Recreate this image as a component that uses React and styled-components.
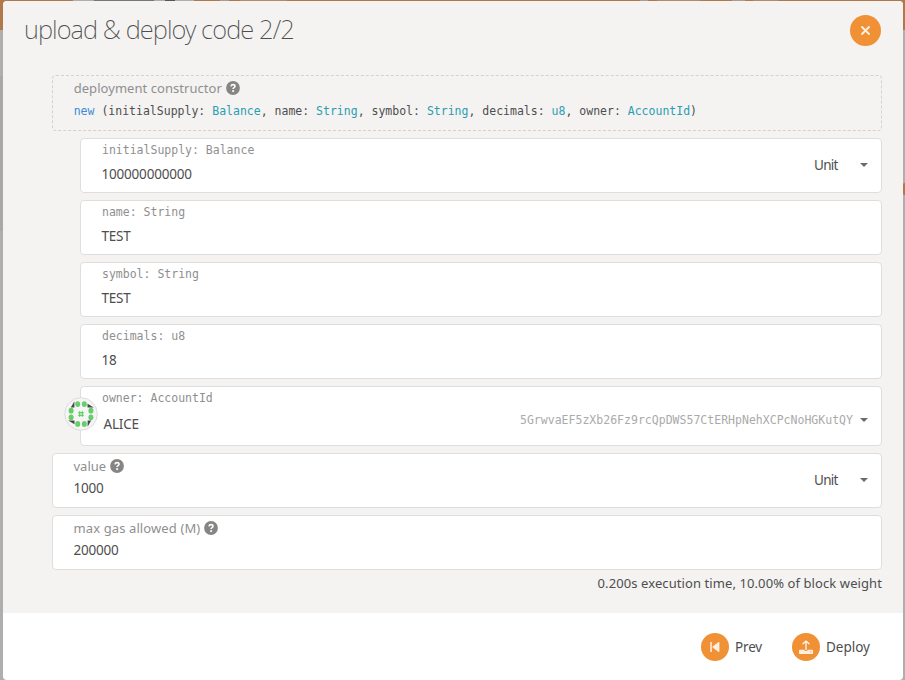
import React from 'react';
import styled, { createGlobalStyle } from 'styled-components';

const GlobalStyle = createGlobalStyle`
  *, *::before, *::after { box-sizing: border-box; }
  html, body { margin: 0; padding: 0; overflow: hidden; }
  body { font-family: "Noto Sans", "Open Sans", sans-serif; font-size: 14px; color: #4e4e4e; }
`;

const Backdrop = styled.div`
  width: 905px;
  height: 680px;
  padding: 1px 2px 0 3px;
  background:
    radial-gradient(circle at 907px 189px, #b1784a 0 6px, transparent 7px),
    linear-gradient(#aaa8a6, #aaa8a6) 0 76px / 3px 155px no-repeat,
    linear-gradient(90deg, #b1784a 0 73px, #b0aeac 73px 94px, #77757a 94px 154px, #b0aeac 154px 165px, #555 165px 175px, #b0aeac 175px 194px, #b1784a 194px 220px, #b09a8c 220px 229px, #b1784a 229px 240px, #b38b6b 240px 287px, #b1784a 287px 640px, #b09a8c 640px 648px, #b1784a 648px 657px, #b38b6b 657px 700px, #b1784a 700px 732px, #b09a8c 732px 745px, #b1784a 745px 753px, #b38b6b 753px 778px, #b1784a 778px) 0 0 / 100% 30px no-repeat,
    #aeaeae;
`;

const Dialog = styled.div`
  display: flex;
  flex-direction: column;
  height: 679px;
  border-radius: 4px;
  overflow: hidden;
  background: #fff;
`;

const Header = styled.header`
  display: flex;
  align-items: flex-start;
  justify-content: space-between;
  height: 74px;
  padding: 14px 22px 0 21px;
  background: #f4f3f2;
`;

const Title = styled.h1`
  margin: 0;
  font-size: 25.5px;
  line-height: 29px;
  font-weight: 200;
  letter-spacing: ${(p) => p.$track}px;
  white-space: nowrap;
  color: #4e4e4e;
`;

const RoundButton = styled.button`
  display: flex;
  align-items: center;
  justify-content: center;
  flex: none;
  width: ${(p) => p.$size}px;
  height: ${(p) => p.$size}px;
  padding: 0;
  border: 0;
  border-radius: 50%;
  color: #fdf0e2;
  background: #f19135;
`;

const Content = styled.main`
  display: flex;
  flex-direction: column;
  gap: 7px;
  height: 538px;
  padding: 0 21px 0 49px;
  background: #f4f3f2;
`;

const Constructor = styled.section`
  height: 56px;
  padding: 4px 20.7px;
  border: 1px dashed #d3d2d1;
  border-radius: 4px;
`;

const Params = styled.div`
  display: flex;
  flex-direction: column;
  gap: 7px;
  padding-left: 28px;
`;

const Field = styled.div`
  position: relative;
  display: flex;
  justify-content: space-between;
  height: ${(p) => p.$height || 55}px;
  padding: ${(p) => p.$top || 3}px 13px 0 20.5px;
  border: 1px solid #dededf;
  border-radius: 4px;
  background: #fff;
`;

const Label = styled.div`
  display: flex;
  align-items: center;
  gap: 4px;
  height: 16px;
  font-size: 13px;
  line-height: 16px;
  letter-spacing: ${(p) => p.$track || 0}px;
  white-space: nowrap;
  color: #8f8f8f;
`;

const MonoLabel = styled(Label)`
  padding-left: 0.5px;
  font-family: "DejaVu Sans Mono", monospace;
  font-size: 11.5px;
`;

const Value = styled.div`
  margin-top: ${(p) => p.$gap}px;
  margin-left: ${(p) => p.$indent || 0}px;
  font-size: 13.5px;
  line-height: 18px;
  letter-spacing: ${(p) => p.$track || 0}px;
`;

const Signature = styled.code`
  display: block;
  margin-top: 7px;
  font-family: "DejaVu Sans Mono", monospace;
  font-size: 11.5px;
  line-height: 17px;
  white-space: nowrap;
`;

const Keyword = styled.span`
  color: #3b8ad8;
`;

const Type = styled.span`
  color: #2a9db0;
`;

const Picker = styled.div`
  display: flex;
  align-items: center;
  align-self: flex-start;
  justify-content: space-between;
  width: 54px;
  height: 18px;
  margin-top: ${(p) => p.$top}px;
  font-size: 13.5px;
  letter-spacing: -0.7px;
`;

const Address = styled.div`
  display: flex;
  align-items: center;
  align-self: flex-start;
  gap: 7px;
  height: 18px;
  margin-top: 21px;
  font-family: "DejaVu Sans Mono", monospace;
  font-size: 11.5px;
  letter-spacing: 0.015px;
  color: #aaa;
`;

const Caret = styled.span`
  width: 0;
  height: 0;
  border: 4px solid transparent;
  border-top-color: #6a6a6a;
  border-bottom: 0;
`;

const IdenticonBadge = styled.div`
  position: absolute;
  left: -17px;
  top: 10px;
  width: 34px;
  height: 34px;
`;

const Note = styled.div`
  margin-top: -4px;
  font-size: 13px;
  line-height: 20px;
  letter-spacing: ${(p) => p.$track}px;
  text-align: right;
  white-space: nowrap;
`;

const Footer = styled.footer`
  display: flex;
  align-items: center;
  justify-content: flex-end;
  gap: 30px;
  height: 67px;
  padding: 1px 33px 0 0;
`;

const Action = styled.div`
  display: flex;
  align-items: center;
  gap: 6px;
  font-size: 13.5px;
  letter-spacing: ${(p) => p.$track || 0}px;
`;

const Help = () => (
  <svg width="14" height="14" viewBox="0 0 14 14">
    <circle cx="7" cy="7" r="6.9" fill="#868583" />
    <path d="M5 5.4C5.2 4.2 6 3.7 7 3.7c1.2 0 2 .6 2 1.6 0 1.4-1.9 1.3-1.9 2.7" fill="none" stroke="#f8f8f8" strokeWidth="1.7" />
    <circle cx="7.1" cy="10.1" r="1.1" fill="#f8f8f8" />
  </svg>
);

const CloseIcon = () => (
  <svg width="11" height="11" viewBox="0 0 11 11">
    <path d="M2 2l7 7M9 2L2 9" stroke="currentColor" strokeWidth="1.8" strokeLinecap="round" />
  </svg>
);

const PrevIcon = () => (
  <svg width="14" height="14" viewBox="0 0 14 14" fill="currentColor">
    <path d="M2.3 2h1.5v10H2.3zM11.4 2.4v9.2c0 .5-.5.6-.8.3L4.6 7.5a.7.7 0 0 1 0-1l6-4.400c.3-.3.8-.1.8.3z" />
  </svg>
);

const UploadIcon = () => (
  <svg width="14" height="14" viewBox="0 0 14 14" fill="currentColor">
    <path d="M7 .9v8.6M4 3.8l3-2.9 3 2.9" fill="none" stroke="currentColor" strokeWidth="1.4" strokeLinejoin="round" strokeLinecap="round" />
    <path fillRule="evenodd" d="M.8 9.7h4.600v.6c0 1 3.200 1 3.200 0v-.6h4.600c.5 0 .8.3.8.8v2.700c0 .5-.3.8-.8.8H.8a.8.8 0 0 1-.8-.8v-2.700c0-.5.3-.8.8-.8zM11.300 11.600v.9h.9v-.9z" />
  </svg>
);

const dots = [[-3.3, -9.9], [3.3, -9.9], [9.9, -3.3], [9.9, 3.3], [3.3, 9.9], [-3.3, 9.9], [-9.9, 3.3], [-9.9, -3.3]];

const Identicon = () => (
  <svg width="34" height="34" viewBox="-17 -17 34 34">
    <circle r="16.3" fill="#f5f5f5" stroke="#dcdcdc" />
    {[0, 90, 180, 270].map((a) => (
      <path key={a} transform={`rotate(${a})`} d="M-6.600-12.800v6.300h-3.600z" fill="#47474b" />
    ))}
    {dots.map(([x, y]) => (
      <ellipse key={`${x},${y}`} cx={x} cy={y} rx="2.5" ry="2.9" fill="#66ce68" />
    ))}
    <path d="M-1.400-2.700v5.400M1.400-2.700v5.400M-2.700-1.400h5.400M-2.700 1.400h5.400" stroke="#66ce68" strokeWidth="1.3" />
  </svg>
);

const args = [
  ['initialSupply', 'Balance'],
  ['name', 'String'],
  ['symbol', 'String'],
  ['decimals', 'u8'],
  ['owner', 'AccountId'],
];

const values = ['100000000000', 'TEST', 'TEST', '18'];

const Unit = ({ top }) => (
  <Picker $top={top}>
    Unit
    <Caret />
  </Picker>
);

export default function App() {
  return (
    <>
      <GlobalStyle />
      <Backdrop>
        <Dialog>
          <Header>
            <Title $track={-0.91}>upload &amp; deploy code 2/2</Title>
            <RoundButton $size={31} aria-label="Close"><CloseIcon /></RoundButton>
          </Header>
          <Content>
            <Constructor>
              <Label $track={0.05}>deployment constructor<Help /></Label>
              <Signature>
                <Keyword>new</Keyword>{' ('}
                {args.map(([name, type], i) => (
                  <React.Fragment key={name}>
                    {i > 0 && ', '}{name}: <Type>{type}</Type>
                  </React.Fragment>
                ))}
                )
              </Signature>
            </Constructor>
            <Params>
              {values.map((value, i) => (
                <Field key={args[i][0]}>
                  <div>
                    <MonoLabel>{args[i].join(': ')}</MonoLabel>
                    <Value $gap={7} $track={-0.2}>{value}</Value>
                  </div>
                  {i === 0 && <Unit top={14} />}
                </Field>
              ))}
              <Field $height={60}>
                <IdenticonBadge><Identicon /></IdenticonBadge>
                <div>
                  <MonoLabel>owner: AccountId</MonoLabel>
                  <Value $gap={9} $indent={2} $track={-0.2}>ALICE</Value>
                </div>
                <Address>5GrwvaEF5zXb26Fz9rcQpDWS57CtERHpNehXCPcNoHGKutQY<Caret /></Address>
              </Field>
            </Params>
            <Field $top={4}>
              <div>
                <Label>value<Help /></Label>
                <Value $gap={5} $track={-0.2}>1000</Value>
              </div>
              <Unit top={13} />
            </Field>
            <Field $top={4}>
              <div>
                <Label $track={0.11}>max gas allowed (M)<Help /></Label>
                <Value $gap={5} $track={-0.2}>200000</Value>
              </div>
            </Field>
            <Note $track={0.09}>0.200s execution time, 10.00% of block weight</Note>
          </Content>
          <Footer>
            <Action $track={-0.2}><RoundButton $size={28} aria-label="Previous"><PrevIcon /></RoundButton>Prev</Action>
            <Action><RoundButton $size={28} aria-label="Upload"><UploadIcon /></RoundButton>Deploy</Action>
          </Footer>
        </Dialog>
      </Backdrop>
    </>
  );
}
